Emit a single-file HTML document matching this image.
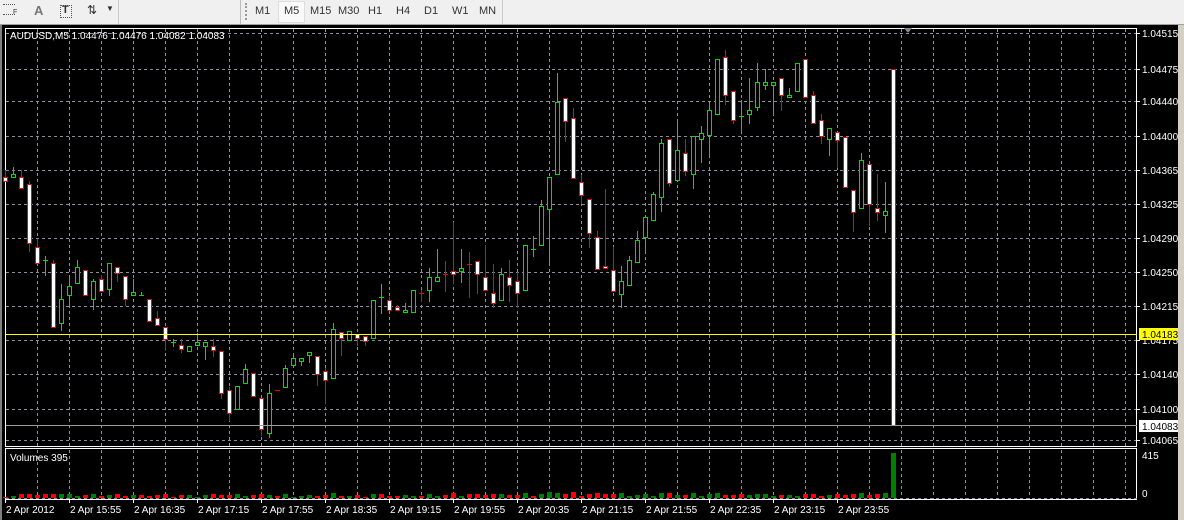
<!DOCTYPE html>
<html><head><meta charset="utf-8"><style>
html,body{margin:0;padding:0;width:1184px;height:520px;overflow:hidden;background:#000;font-family:"Liberation Sans",sans-serif}
#tb{position:absolute;left:0;top:0;width:1184px;height:24px;background:#f0f0f0;border-bottom:1px solid #a0a0a0}
.tf{position:absolute;top:5px;font-size:11px;color:#333}
#rs{position:absolute;left:1178px;top:25px;width:6px;height:495px;background:#d4d0c8}
#ls{position:absolute;left:0;top:25px;width:2px;height:495px;background:#808080}
svg{position:absolute;left:0;top:0}
</style></head><body>
<div id="tb">
<div style="position:absolute;left:3px;top:4px;width:12px;height:9px;border-top:1px dotted #555;border-bottom:1px dotted #555"></div><div class="tf" style="left:13px;top:9px;font-size:7px">F</div>
<div class="tf" style="left:34px;font-size:13px;top:3px;color:#777;font-weight:bold">A</div>
<div style="position:absolute;left:60px;top:5px;width:10px;height:11px;border:1px dotted #555"></div><div class="tf" style="left:62px;top:4px;font-weight:bold;font-size:11px">T</div>
<div class="tf" style="left:87px;top:3px;font-size:12px">⇅</div><div class="tf" style="left:106px;top:4px;font-size:8px">▼</div>
<div style="position:absolute;left:118px;top:0;width:1px;height:24px;background:#ccc"></div>
<div style="position:absolute;left:240px;top:0;width:1px;height:24px;background:#bbb"></div>
<div style="position:absolute;left:245px;top:3px;width:2px;height:17px;border-left:2px dotted #999"></div>
<div style="position:absolute;left:278px;top:1px;width:25px;height:20px;background:#fafafa;border:1px solid #ddd"></div>
<div class="tf" style="left:255px">M1</div><div class="tf" style="left:284px">M5</div><div class="tf" style="left:310px">M15</div><div class="tf" style="left:338px">M30</div><div class="tf" style="left:368px">H1</div><div class="tf" style="left:396px">H4</div><div class="tf" style="left:424px">D1</div><div class="tf" style="left:452px">W1</div><div class="tf" style="left:479px">MN</div>
<div style="position:absolute;left:502px;top:0;width:1px;height:24px;background:#ccc"></div>
</div>
<div id="ls"></div><div id="rs"></div>
<svg id="s" width="1184" height="520" shape-rendering="crispEdges" font-family="Liberation Sans, sans-serif" font-size="10"></svg>
<script>
var D=[[177,181,170,181],[177,174,167,177],[177,188,170,188],[184,243,181,251],[247,263,239,263],[260,260,256,275],[263,327,260,327],[323,299,284,330],[295,286,278,305],[283,267,260,283],[270,295,270,295],[299,281,279,309],[279,291,275,291],[289,263,263,295],[267,273,267,281],[276,299,276,305],[295,292,279,295],[295,295,292,295],[299,321,299,321],[318,325,311,325],[327,339,327,350],[342,342,339,346],[345,349,339,352],[351,346,346,351],[345,342,333,345],[346,342,342,359],[346,350,339,356],[351,393,351,398],[390,413,387,420],[409,386,386,409],[383,369,364,383],[373,396,373,396],[398,429,398,435],[433,393,384,437],[390,390,390,390],[387,368,365,387],[365,358,356,365],[361,358,358,365],[355,352,352,362],[356,374,356,385],[371,380,368,403],[378,329,323,378],[332,338,332,355],[340,331,331,340],[334,338,334,345],[336,341,336,345],[338,300,300,338],[297,297,284,313],[300,310,297,310],[307,310,305,310],[312,310,303,312],[312,290,290,312],[293,293,290,301],[290,277,268,301],[281,277,249,281],[274,274,261,291],[271,274,222,283],[271,268,249,282],[264,264,252,297],[261,274,261,293],[277,290,245,290],[293,303,264,307],[300,274,268,300],[277,285,260,301],[281,293,272,307],[290,245,245,290],[249,249,236,256],[245,206,200,245],[209,177,177,264],[174,102,73,174],[98,121,98,141],[118,178,108,178],[182,195,175,203],[199,233,199,247],[237,269,231,269],[266,268,189,268],[270,291,247,291],[294,281,266,307],[285,260,256,285],[262,240,231,262],[237,217,217,252],[220,194,192,220],[197,143,139,211],[139,183,139,186],[180,150,121,180],[153,171,139,175],[174,136,136,188],[139,133,126,162],[135,110,104,156],[114,59,59,114],[57,95,50,104],[91,120,91,123],[116,116,100,131],[114,110,78,123],[107,82,63,110],[85,82,69,89],[85,82,82,114],[78,95,78,110],[97,95,88,97],[91,63,63,91],[59,97,59,97],[95,123,91,123],[120,136,114,143],[139,128,128,155],[132,140,132,167],[137,187,137,187],[190,212,190,231],[208,160,153,208],[164,204,164,225],[208,212,174,220],[215,211,182,232],[69,425,69,425]];
var h='';
function R(x,y,w,hh,c){h+='<rect x="'+x+'" y="'+y+'" width="'+w+'" height="'+hh+'" fill="'+c+'"/>';}
function L(x1,y1,x2,y2,c,d){h+='<line x1="'+x1+'" y1="'+y1+'" x2="'+x2+'" y2="'+y2+'" stroke="'+c+'"'+(d?' stroke-dasharray="3,3"':'')+'/>';}
var G='#8a8f98';
var hy=[33,69,101,136,170,204,238,272,306,340,374,409,440],lab=['1.04515','1.04475','1.04440','1.04400','1.04365','1.04325','1.04290','1.04250','1.04215','1.04175','1.04140','1.04100','1.04065'];
for(var x=37;x<1137;x+=32){L(x+.5,29,x+.5,446,G,1);L(x+.5,450,x+.5,499,G,1);}
hy.forEach(function(y,i){L(6,y+.5,1137,y+.5,G,1);h+='<text x="1142" y="'+(y+4)+'" fill="#fff">'+lab[i]+'</text>';L(1137,y+.5,1140,y+.5,'#fff');});
h+='<rect x="5.5" y="28.5" width="1131" height="418" fill="none" stroke="#fff"/>';
h+='<rect x="5.5" y="448.5" width="1131" height="51" fill="none" stroke="#fff"/>';
L(6,498.5,1137,498.5,G,1);
var vols=[];
D.forEach(function(c,k){var cx=5+8*k,o=c[0],cl=c[1],hi=c[2],lo=c[3];var bull=cl<o;var col=(bull?'#00e000':'#ff0000');if(o==cl)col=(k%3==1?'#ff0000':'#00e000');
R(cx,hi,1,lo-hi+1,col);var t=Math.min(o,cl),b=Math.max(o,cl);
if(b-t<1){R(cx-2,t,5,1,col);}else{R(cx-2,t,5,b-t+1,col);if(b-t>1)R(cx-1,t+1,3,b-t-1,bull?'#000':'#fff');}
var v=Math.min(9,Math.round(1+(lo-hi)/25+((k*37)%3)));if(k==111)v=45;vols.push([cx,v,(bull||k==111)?'#008000':'#ff0000']);});
vols.forEach(function(v){R(v[0]-2,498-v[1],5,v[1],v[2]);});
L(6,334.5,1137,334.5,'#ffff00');R(1139,328,39,12,'#ffff00');h+='<text x="1142" y="338" fill="#000">1.04183</text>';
L(6,425.5,1137,425.5,'#9a9a9a');R(1139,420,39,12,'#fff');h+='<text x="1142" y="430" fill="#000">1.04083</text>';
h+='<text x="1142" y="459" fill="#fff">415</text><text x="1142" y="497" fill="#fff">0</text>';
h+='<text x="10" y="39" fill="#fff">AUDUSD,M5  1.04476 1.04476 1.04082 1.04083</text>';
h+='<text x="10" y="461" fill="#fff">Volumes 395</text>';
var tl=['2 Apr 2012','2 Apr 15:55','2 Apr 16:35','2 Apr 17:15','2 Apr 17:55','2 Apr 18:35','2 Apr 19:15','2 Apr 19:55','2 Apr 20:35','2 Apr 21:15','2 Apr 21:55','2 Apr 22:35','2 Apr 23:15','2 Apr 23:55'];
tl.forEach(function(t,i){var x=5+64*i;L(x+.5,499,x+.5,503,'#fff');h+='<text x="'+(x+1)+'" y="513" fill="#fff">'+t+'</text>';});
h+='<polygon points="904,28 912,28 908,33" fill="#808890"/>';
document.getElementById('s').innerHTML=h;
</script>
</body></html>
